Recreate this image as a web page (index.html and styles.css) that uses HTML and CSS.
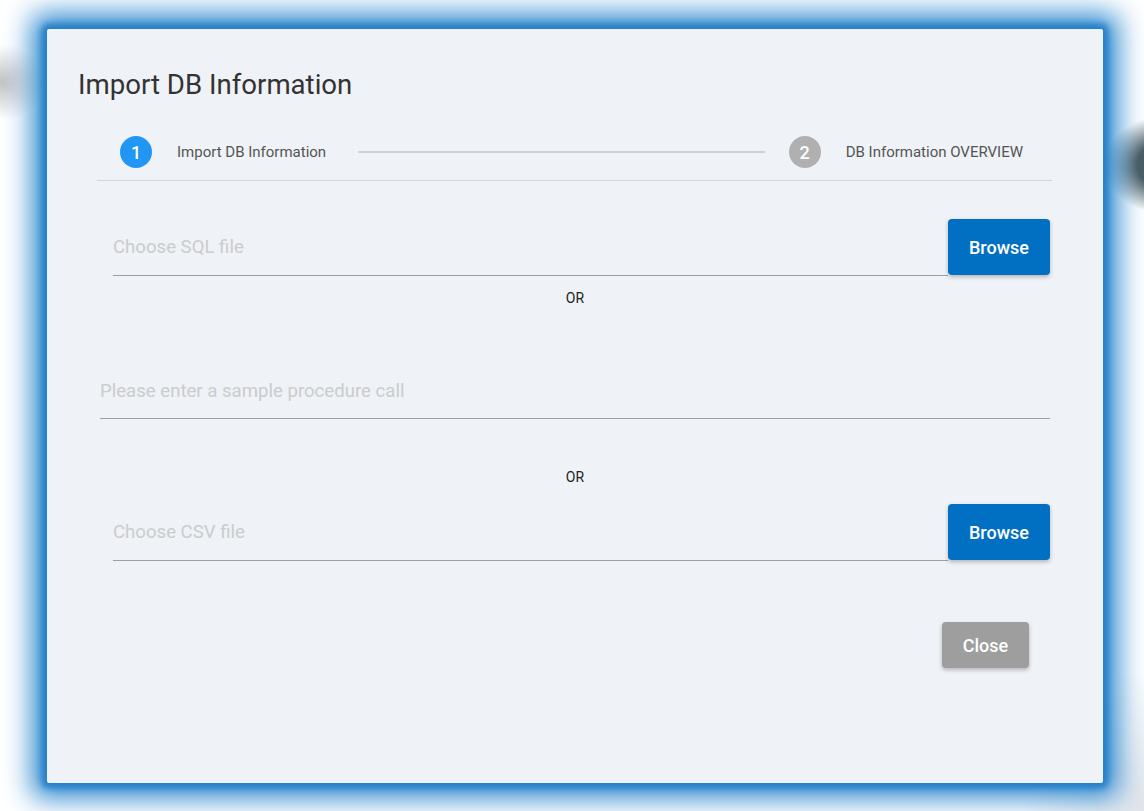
FILE: index.html
```html
<!DOCTYPE html>
<html lang="en">
<head>
<meta charset="utf-8">
<title>Import DB Information</title>
<link rel="stylesheet" href="styles.css">
</head>
<body>
<div class="dialog" role="dialog" aria-labelledby="dlg-title">
  <h2 class="title" id="dlg-title">Import DB Information</h2>
  <div class="stepper">
    <div class="step">
      <span class="step-num active">1</span>
      <span class="step-label">Import DB Information</span>
    </div>
    <div class="step-line"></div>
    <div class="step">
      <span class="step-num">2</span>
      <span class="step-label">DB Information OVERVIEW</span>
    </div>
  </div>

  <div class="file-row row-sql">
    <input class="field" type="text" placeholder="Choose SQL file">
    <button class="btn btn-primary" type="button">Browse</button>
  </div>
  <div class="or or-1">OR</div>

  <div class="proc-row">
    <input class="field field-proc" type="text" placeholder="Please enter a sample procedure call">
  </div>
  <div class="or or-2">OR</div>

  <div class="file-row row-csv">
    <input class="field" type="text" placeholder="Choose CSV file">
    <button class="btn btn-primary" type="button">Browse</button>
  </div>

  <div class="actions">
    <button class="btn btn-close" type="button">Close</button>
  </div>
</div>
</body>
</html>
```

FILE: styles.css
```css
html, body {
  margin: 0;
  padding: 0;
}

body {
  width: 1144px;
  height: 811px;
  overflow: hidden;
  position: relative;
  font-family: Roboto, "Liberation Sans", Arial, sans-serif;
  background:
    radial-gradient(ellipse 46px 38px at 2px 82px, rgba(185, 185, 185, 0.85), rgba(185, 185, 185, 0) 100%),
    radial-gradient(ellipse 70px 50px at 1172px 165px, #46555c 0%, #4d5c63 50%, rgba(77, 92, 99, 0) 100%),
    radial-gradient(ellipse 120px 140px at 1144px 811px, rgba(225, 228, 234, 1), rgba(225, 228, 234, 0) 100%),
    #ffffff;
}

.dialog {
  position: absolute;
  left: 47px;
  top: 29px;
  width: 1056px;
  height: 754px;
  box-sizing: border-box;
  background: #eff2f6;
  border-radius: 2px;
  box-shadow:
    0 0 6px 5px #2680c8,
    0 0 28px 15px #2a87cf;
  padding-top: 39px;
}

.title {
  margin: 0 0 0 31px;
  font-size: 27.6px;
  line-height: 34px;
  font-weight: 400;
  color: #333333;
}

.stepper {
  display: flex;
  align-items: center;
  margin: 0 51px 0 50px;
  padding: 34px 29px 12px 23px;
  border-bottom: 1px solid #d3d5d8;
}

.step {
  display: flex;
  align-items: center;
  gap: 25px;
}

.step-num {
  width: 32px;
  height: 32px;
  border-radius: 50%;
  background: #b0b0b0;
  color: #ffffff;
  font-size: 18px;
  font-weight: 500;
  display: flex;
  align-items: center;
  justify-content: center;
}

.step-num.active {
  background: #2196f3;
}

.step-label {
  font-size: 15px;
  color: #555555;
}

.step-line {
  flex: 1;
  height: 2px;
  background: #cfd1d4;
  margin: 0 24px 0 32px;
}

.file-row {
  display: flex;
  align-items: flex-start;
  margin: 0 53px 0 66px;
}

.row-sql {
  margin-top: 38px;
}

.row-csv {
  margin-top: 19px;
}

.field {
  flex: 1;
  min-width: 0;
  height: 57px;
  box-sizing: border-box;
  border: none;
  border-bottom: 1px solid #9e9fa1;
  background: transparent;
  padding: 0;
  margin: 0;
  font-family: Roboto, "Liberation Sans", Arial, sans-serif;
  font-size: 18.6px;
  color: #333333;
  outline: none;
}

.field::placeholder {
  color: #cbcccd;
}

.proc-row {
  display: flex;
  margin: 57px 53px 0 53px;
}

.field-proc {
  height: 56px;
}

.or {
  text-align: center;
  font-size: 14px;
  line-height: 16px;
  font-weight: 400;
  color: #222222;
}

.or-1 {
  margin-top: 14px;
}

.or-2 {
  margin-top: 50px;
}

.btn {
  border: none;
  border-radius: 4px;
  color: #ffffff;
  font-family: Roboto, "Liberation Sans", Arial, sans-serif;
  font-size: 18px;
  font-weight: 500;
  cursor: pointer;
  padding: 0;
  box-shadow: 0 2px 4px rgba(0, 0, 0, 0.25);
}

.btn-primary {
  width: 102px;
  height: 56px;
  background: #0270c2;
}

.actions {
  display: flex;
  justify-content: flex-end;
  margin: 61px 74px 0 0;
}

.btn-close {
  width: 87px;
  height: 46px;
  background: #9e9e9e;
}
```
